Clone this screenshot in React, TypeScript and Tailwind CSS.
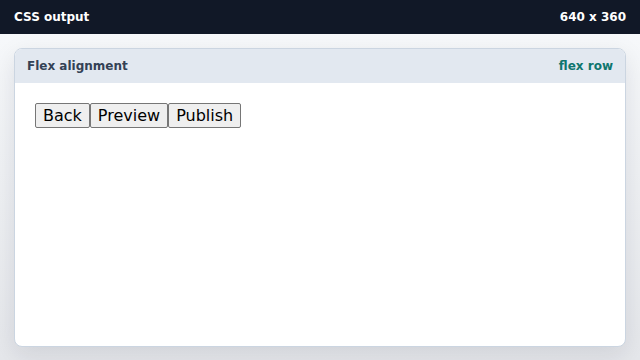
export default function App() {
  return (
    <div className="flex h-[360px] w-[640px] flex-col bg-gradient-to-b from-[#f8fafc] to-[#e5e7eb] font-['DejaVu_Sans',sans-serif]">
      <div className="flex h-[34px] shrink-0 items-center justify-between bg-[#111827] px-[14px] text-[12px] font-bold text-white">
        <span>CSS output</span>
        <span>640 x 360</span>
      </div>
      <div className="flex flex-1 flex-col px-[14px] pb-[13px] pt-[14px]">
        <div className="flex flex-1 flex-col overflow-hidden rounded-lg border border-[#cbd5e1] bg-white shadow-[0_8px_24px_rgba(15,23,42,0.10)]">
          <div className="flex h-[34px] shrink-0 items-center justify-between bg-[#e2e8f0] px-3 text-[12px] font-bold">
            <span className="text-[#334155]">Flex alignment</span>
            <span className="text-[#0f766e]">flex row</span>
          </div>
          <div className="flex-1 p-5">
            <div className="flex flex-row">
              <button className="rounded-[2px] border border-[#767676] bg-[#efefef] px-[7px] py-px text-[16px] leading-[21px] text-black">Back</button>
              <button className="rounded-[2px] border border-[#767676] bg-[#efefef] px-[7px] py-px text-[16px] leading-[21px] text-black">Preview</button>
              <button className="rounded-[2px] border border-[#767676] bg-[#efefef] px-[7px] py-px text-[16px] leading-[21px] text-black">Publish</button>
            </div>
          </div>
        </div>
      </div>
    </div>
  );
}
